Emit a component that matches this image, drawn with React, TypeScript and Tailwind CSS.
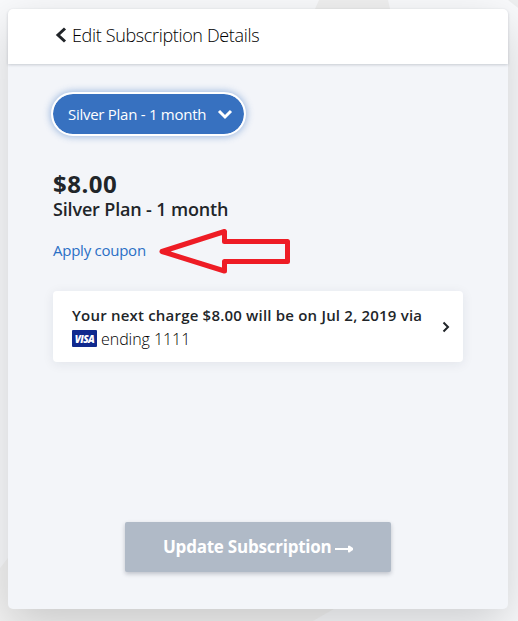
import React from "react";
import { clsx } from "clsx";

interface ChevronProps {
  className?: string;
  points: string;
  viewBox: string;
  strokeWidth: number;
}

function Chevron({ className, points, viewBox, strokeWidth }: ChevronProps) {
  return (
    <svg
      viewBox={viewBox}
      className={clsx("flex-shrink-0", className)}
      fill="none"
      stroke="currentColor"
      strokeWidth={strokeWidth}
    >
      <polyline points={points} />
    </svg>
  );
}

function VisaBadge() {
  return (
    <span className="flex h-[17px] w-[25px] items-center justify-center rounded-[1px] bg-[#10298e] text-[10px] font-extrabold italic leading-none tracking-[-0.6px] text-white">
      VISA
    </span>
  );
}

/** Large shapes behind the card */
function Backdrop() {
  return (
    <svg viewBox="0 0 518 621" className="absolute inset-0 h-full w-full">
      <path d="M319 0 L388 0 L390 9 L390 100 L300 100 L315 9 Z" fill="#f0f0f0" />
      <path d="M0 568 L8 558 L8 500 L160 560 L334 609 L313 621 L0 621 Z" fill="#f3f3f3" />
      <path d="M508 0 L518 8 L518 0 Z" fill="#eeeff0" />
    </svg>
  );
}

function CouponArrow() {
  return (
    <svg viewBox="0 0 132 46" className="ml-[13px] h-[46px] w-[132px] flex-shrink-0">
      <path
        d="M3 23.5 L65.5 3.5 V13.5 H128.5 V33.5 H65.5 V43 Z"
        fill="none"
        stroke="#ee1c25"
        strokeWidth="5"
        strokeLinejoin="round"
      />
    </svg>
  );
}

export default function App() {
  return (
    <div className="relative h-[621px] w-[518px] overflow-hidden bg-[#f9fafc] px-2 pt-[9px] font-['Open_Sans','Noto_Sans',sans-serif] text-[#212529]">
      <Backdrop />
      <main className="relative flex h-[600px] w-[500px] flex-col rounded-[5px] bg-[#f3f5f9] shadow-[0_16px_48px_rgba(0,0,0,0.175)]">
        {/* Header */}
        <header className="flex h-[55px] flex-shrink-0 items-center rounded-t-[5px] bg-white pl-[47px] shadow-[0_1px_3px_rgba(30,40,60,0.2)]">
          <Chevron
            className="mt-[-4px] h-[16px] w-[12px]"
            viewBox="0 0 12 16"
            points="10,1.5 3,8 10,14.5"
            strokeWidth={3}
          />
          <h1 className="ml-[5px] mt-[-3px] whitespace-nowrap text-[18px] font-light leading-6 tracking-[-0.35px] text-black">
            Edit Subscription Details
          </h1>
        </header>

        <section className="flex flex-1 flex-col pl-[45px]">
          {/* Plan picker */}
          <button className="ml-[-2px] mt-[28px] flex h-[44px] w-[195px] items-center rounded-full border-2 border-white bg-[#3771c0] bg-clip-padding pl-[15px] text-white shadow-[0_0_7px_1px_rgba(55,113,192,0.45)]">
            <span className="whitespace-nowrap text-[15px] leading-5 tracking-[-0.27px]">
              Silver Plan - 1 month
            </span>
            <Chevron
              className="ml-auto mr-[11px] h-[12px] w-[16px]"
              viewBox="0 0 16 12"
              points="2,3 8,9 14,3"
              strokeWidth={3}
            />
          </button>

          <div className="mt-[33px] text-[24px] font-bold leading-[30px] tracking-[0.5px]">$8.00</div>
          <div className="mt-[-2px] whitespace-nowrap text-[18px] font-semibold leading-6 tracking-[-0.16px]">
            Silver Plan - 1 month
          </div>

          <div className="mt-[7px] flex h-[46px] items-center">
            <a className="mt-[-2px] w-[93px] whitespace-nowrap text-[15px] leading-5 tracking-[-0.25px] text-[#2a6fc5]">
              Apply coupon
            </a>
            <CouponArrow />
          </div>

          {/* Next charge */}
          <div className="mt-[17px] flex h-[71px] w-[410px] items-center rounded-[4px] bg-white pl-[19px] pr-[13px] shadow-[0_2px_12px_rgba(30,40,70,0.08)]">
            <div className="text-[15px] leading-6">
              <div className="whitespace-nowrap font-semibold tracking-[0.2px]">
                Your next charge $8.00 will be on Jul 2, 2019 via
              </div>
              <div className="flex items-center gap-[4px]">
                <VisaBadge />
                <span className="whitespace-nowrap text-[16px] font-light tracking-[-0.05px] text-black">ending 1111</span>
              </div>
            </div>
            <Chevron
              className="ml-auto h-[12px] w-[8px]"
              viewBox="0 0 8 12"
              points="1.5,1.5 6,6 1.5,10.5"
              strokeWidth={2}
            />
          </div>

          {/* Submit */}
          <button className="ml-[72px] mt-[160px] flex h-[50px] w-[266px] items-center rounded-[2px] bg-[#b0bac7] pl-[38px] text-white shadow-[0_2px_4px_rgba(30,40,60,0.25)]">
            <span className="whitespace-nowrap text-[17px] font-bold leading-6 tracking-[-0.23px]">
              Update Subscription
            </span>
            <svg viewBox="0 0 18 8" className="ml-[3px] mt-[4px] h-[8px] w-[18px]" fill="currentColor">
              <path d="M0 3 H13 V1 Q14 0 15 1 L18 3 V5 L15 7 Q14 8 13 7 V5 H0 Z" />
            </svg>
          </button>
        </section>
      </main>
    </div>
  );
}
